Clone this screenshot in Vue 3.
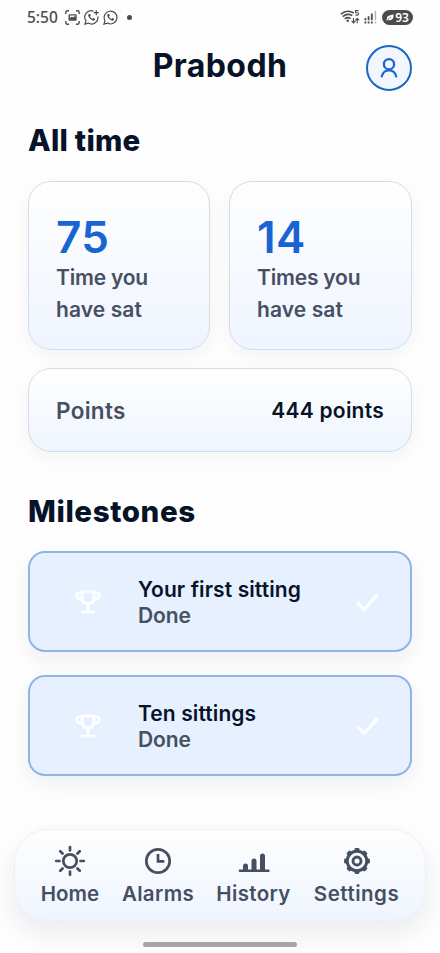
<script setup>
const stats = [
  { value: '75', lines: ['Time you', 'have sat'] },
  { value: '14', lines: ['Times you', 'have sat'] },
]
const milestones = [
  { title: 'Your first sitting', status: 'Done', key: 'first' },
  { title: 'Ten sittings', status: 'Done', key: 'ten' },
]
const rays = [0, 45, 90, 135, 180, 225, 270, 315]
const teeth = [0, 45, 90, 135, 180, 225, 270, 315]
</script>

<template>
  <div class="screen">
    <div class="status">
      <span class="time">5:50</span>
      <svg class="s-shot" viewBox="0 0 15 15" fill="none" stroke="#4c4c4c" stroke-width="1.4">
        <path d="M.8 4V2.4Q.8.8 2.4.8H4M11 .8h1.6q1.6 0 1.6 1.6V4M14.2 11v1.6q0 1.6-1.6 1.6H11M4 14.2H2.400Q.8 14.200.8 12.600V11" />
        <rect x="4.200" y="4.900" width="6.800" height="5.200" rx=".6" />
        <path d="M4.500 9.800V8L7 6.800l1.200.8L9.700 6l1.300 2v2z" fill="#4c4c4c" stroke="none" />
      </svg>
      <svg class="s-wa plus" viewBox="0 0 15 15" fill="none" stroke="#4c4c4c" stroke-width="1.200">
        <path d="M9.500 1.200A6.300 6.300 0 0 0 2 10.700L.9 14.100l3.500-1A6.300 6.300 0 0 0 13.800 6.300M12.300.2v5M9.800 2.700h5" />
        <path d="M4.900 4.100q-1.700 1.300.7 4.100 2.700 3 4.600 2.300 1-.6.9-1.700L9.300 7.900l-.9 1Q6.700 8.200 6 6.500l.8-.9L6 4z" fill="#4c4c4c" stroke="none" />
      </svg>
      <svg class="s-wa" viewBox="0 0 15 15" fill="none" stroke="#4c4c4c" stroke-width="1.200">
        <path d="M2 10.700.9 14.100l3.500-1A6.400 6.400 0 1 0 2 10.700z" />
        <path d="M4.900 4.100q-1.700 1.300.7 4.100 2.700 3 4.600 2.300 1-.6.9-1.700L9.300 7.900l-.9 1Q6.700 8.200 6 6.500l.8-.9L6 4z" fill="#4c4c4c" stroke="none" />
      </svg>
      <span class="dot"></span>
      <span class="grow"></span>
      <svg class="s-wifi" viewBox="0 0 20 16" fill="none" stroke="#4c4c4c" stroke-width="1.500">
        <path d="M.8 5.200Q7 .2 13.800 4M2.700 7.600Q7.500 3.700 12.300 6.600M4.700 9.900Q7.600 7.500 10.500 9.600" />
        <circle cx="7.700" cy="11.800" r="1.200" fill="#4c4c4c" stroke="none" />
        <path d="M18.600 1.600h-3v2.100h1.600q1.400 0 1.400 1.200t-1.400 1.200h-1.700" stroke-width="1.100" />
        <path d="M13.500 9v4.800m-1.900-1.900 1.900 2 1.900-2M17.200 14.200V9.400m-1.900 1.900 1.900-2 1.900 2" stroke-width="1.100" />
      </svg>
      <svg class="s-signal" viewBox="0 0 13 14" fill="#4c4c4c">
        <path d="M.5 8h1.800v2.200H.5zM3.700 6.300h1.800v3.900H3.700zM6.900 3.500h1.800v6.700H6.900z" />
        <path d="M.5 11.500h1.800v2H.5zM3.700 11.500h1.800v2H3.700zM6.900 11.500h1.800v2H6.900z" />
        <path d="M10.700.8h1.500v9.400h-1.500zM10.700 11.500h1.500v2h-1.500z" opacity=".4" />
      </svg>
      <span class="battery">
        <svg viewBox="0 0 9 8"><path d="M.3 7.700Q1 6.600 1 5.400 1 2 4.700 1.500 7 1.200 8.500.4 9 6.700 4.900 7 3.200 7.200 2.100 6.300L1.200 7.700z" fill="#fff" /><path d="M2 6.200Q3.500 4.300 5.700 3.700" stroke="#4c4c4c" stroke-width=".7" fill="none" /></svg>
        <span>93</span>
      </span>
    </div>

    <header class="header">
      <h1>Prabodh</h1>
      <div class="avatar">
        <svg viewBox="0 0 20 22" fill="none" stroke="#1a66cc" stroke-width="2.300" stroke-linecap="round">
          <circle cx="10" cy="7.200" r="5.100" />
          <path d="M2.800 19.400C4.200 11.200 15.800 11.200 17.200 19.400" />
        </svg>
      </div>
    </header>

    <main>
      <h2 class="all">All time</h2>
      <section class="stats">
        <article v-for="s in stats" :key="s.value" class="card stat">
          <strong>{{ s.value }}</strong>
          <span v-for="l in s.lines" :key="l">{{ l }}</span>
        </article>
      </section>
      <section class="card points">
        <span class="label">Points</span>
        <span class="amount">444 points</span>
      </section>

      <h2 class="miles">Milestones</h2>
      <section class="list">
        <article v-for="m in milestones" :key="m.key" class="milestone">
          <svg class="trophy" viewBox="0 0 26 24" fill="none" stroke="#fcfeff" stroke-width="2.900" stroke-linecap="round" stroke-linejoin="round">
            <path d="M7.300 2h11.400v6.500q0 5.300-5.700 5.300T7.300 8.500zM7.300 3H3.500Q1.600 3 1.700 5q.4 4.200 5.900 5M18.700 3h3.800q1.900 0 1.800 2-.4 4.200-5.900 5M13 14v7.500M7 22h12" />
          </svg>
          <div class="text">
            <span class="title">{{ m.title }}</span>
            <span class="done">{{ m.status }}</span>
          </div>
          <svg class="check" viewBox="0 0 23 19" fill="none" stroke="#fcfeff" stroke-width="3.400">
            <path d="M1.300 9.500 8.300 16.300 21.500 1.500" />
          </svg>
        </article>
        <article class="upcoming"></article>
      </section>
    </main>

    <nav class="nav">
      <div class="item home">
        <svg viewBox="0 0 32 32" fill="none" stroke="#454f61" stroke-width="2.700" stroke-linecap="round">
          <circle cx="16" cy="16" r="6.700" />
          <path v-for="r in rays" :key="r" d="M16 2.200v3.300" :transform="`rotate(${r} 16 16)`" />
        </svg>
        <span>Home</span>
      </div>
      <div class="item alarms">
        <svg viewBox="0 0 32 32" fill="none" stroke="#454f61" stroke-width="2.700">
          <circle cx="16" cy="16" r="11.700" />
          <path d="M16 9v7.300h6.300" />
        </svg>
        <span>Alarms</span>
      </div>
      <div class="item history">
        <svg viewBox="0 0 32 32" fill="#454f61">
          <rect x="0.700" y="24.500" width="31" height="2.500" rx="1.200" />
          <path d="M5 25v-4a2.500 2.500 0 0 1 5 0v4zM13.500 25v-9a2.500 2.500 0 0 1 5 0v9zM22 25V11a2.500 2.500 0 0 1 5 0v14z" />
        </svg>
        <span>History</span>
      </div>
      <div class="item settings">
        <svg viewBox="0 0 32 32" fill="none" stroke="#454f61">
          <circle cx="16" cy="16" r="9.800" stroke-width="3" />
          <circle cx="16" cy="16" r="4" stroke-width="2.900" />
          <path v-for="t in teeth" :key="t" d="M14.800 4.400h2.400" stroke-width="2.600" stroke-linecap="round" :transform="`rotate(${t} 16 16)`" />
        </svg>
        <span>Settings</span>
      </div>
    </nav>
    <div class="handle"></div>
  </div>
</template>

<style>
body { margin: 0; background: #fefefe; }
</style>

<style scoped>
* { box-sizing: border-box; }
.screen {
  position: relative;
  width: 440px;
  height: 953px;
  overflow: hidden;
  background: #fefefe;
  color: #071329;
  font-family: Inter, "Liberation Sans", sans-serif;
  white-space: nowrap;
}
.status { display: flex; align-items: center; height: 34px; padding: 0 27px; color: #4c4c4c; }
.time { width: 38px; font: 500 15.5px/34px "Noto Sans", sans-serif; }
.s-shot { width: 15px; height: 15px; margin-right: 4px; }
.s-wa { width: 15px; height: 15px; }
.s-wa.plus { margin-right: 4px; }
.dot { width: 5px; height: 5px; margin-left: 9px; border-radius: 50%; background: #4c4c4c; }
.grow { flex: 1; }
.s-wifi { width: 20px; height: 16px; margin-right: 4px; }
.s-signal { width: 13px; height: 14px; margin-right: 5px; }
.battery {
  display: flex; align-items: center; justify-content: center; gap: 1px;
  width: 31px; height: 15px; border-radius: 8px; background: #4c4c4c; color: #fff;
  font: 600 12px/15px "Noto Sans", sans-serif;
}
.battery svg { width: 8px; height: 7px; }

.header {
  display: grid; grid-template-columns: 46px 1fr 46px; align-items: center;
  height: 68px; padding: 0 28px;
}
h1 { grid-column: 2; margin: 0; text-align: center; font-size: 32px; line-height: 40px; font-weight: 750; letter-spacing: .4px; padding-bottom: 4px; }
.avatar {
  display: flex; align-items: center; justify-content: center;
  width: 46px; height: 46px; border: 2px solid #1a66c4; border-radius: 50%; background: #f2f7ff;
}
.avatar svg { width: 20px; height: 22px; }

main { padding: 0 28px; }
h2 { margin: 0; font-size: 29.5px; line-height: 40px; font-weight: 780; }
.all { padding-top: 18px; letter-spacing: .25px; }
.stats { display: grid; grid-template-columns: 182px 183px; gap: 19px; margin-top: 21px; }
.card {
  border: 1px solid #d3dce8; border-radius: 23px;
  background: linear-gradient(#fefefe, #eff5ff);
  box-shadow: 0 6px 20px rgba(15, 35, 65, .05);
}
.stat {
  display: flex; flex-direction: column; height: 169px; padding: 31px 27px 0;
  color: #465062; font-size: 21px; line-height: 32px; font-weight: 600; letter-spacing: -.2px;
}
.stat span:last-child { letter-spacing: .1px; }
.stat strong { margin-bottom: 1px; color: #1764d2; font-size: 44px; line-height: 48px; font-weight: 600; letter-spacing: .4px; }
.points { display: flex; justify-content: space-between; align-items: center; height: 84px; margin-top: 18px; padding: 0 27px; }
.label { color: #465062; font-size: 22.5px; font-weight: 600; letter-spacing: .3px; }
.amount { padding-top: 1px; font-size: 21px; font-weight: 600; letter-spacing: .25px; }
.miles { padding-top: 39px; letter-spacing: .6px; }
.list { display: grid; gap: 23px; margin-top: 20px; }
.milestone {
  display: flex; align-items: center; height: 101px; padding: 0 31px 0 45px;
  border: 2px solid #8fb5e2; border-radius: 17px; background: #e7f0ff;
  box-shadow: 0 8px 22px rgba(15, 35, 65, .07);
}
.trophy { width: 26px; height: 24px; }
.text { display: flex; flex-direction: column; flex: 1; margin-left: 37px; padding-top: 2px; font-size: 21px; line-height: 26px; font-weight: 600; }
.title { letter-spacing: .1px; }
.done { color: #465062; letter-spacing: -.1px; }
.check { width: 23px; height: 19px; margin-top: 1px; }
.upcoming { height: 100px; border: 1px solid #fbfcfd; border-radius: 17px; background: #fefefe; }

.nav {
  position: absolute; left: 14px; top: 829px; width: 412px; height: 92px;
  display: flex; padding: 15px 26px 0; gap: 24px;
  border: 1px solid #edf1f7; border-radius: 34px;
  background: linear-gradient(#fefefe, #eff5ff);
  box-shadow: 0 12px 28px rgba(15, 35, 65, .09);
  color: #454f61; font-size: 20.5px; line-height: 26px; font-weight: 600;
}
.item { display: flex; flex-direction: column; align-items: center; gap: 4px; }
.item svg { width: 32px; height: 32px; }
.home { width: 58px; }
.alarms { width: 70px; letter-spacing: .35px; }
.history { width: 73px; letter-spacing: .35px; }
.settings { width: 85px; letter-spacing: .5px; }
.handle { position: absolute; left: 143px; top: 942px; width: 154px; height: 5px; border-radius: 3px; background: #a5a6a8; }
</style>
